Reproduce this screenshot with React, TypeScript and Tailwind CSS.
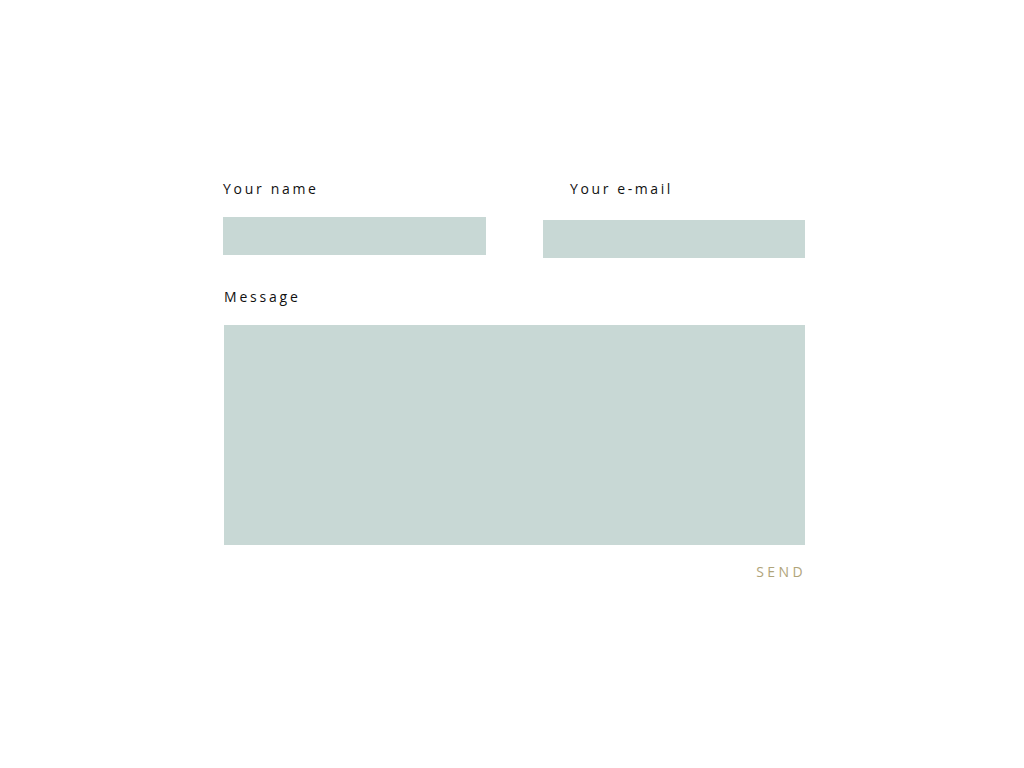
import React from "react";

export default function App() {
  return (
    <div className="w-[1024px] h-[768px] bg-white" style={{ fontFamily: '"Open Sans", sans-serif' }}>
      <div className="pt-[179px] pl-[223px] w-[805px] flex flex-col">
        <div className="flex">
          <div className="w-[263px] flex flex-col">
            <label className="text-[14px] leading-[20px] tracking-[2.7px] text-[#111]">Your name</label>
            <div className="mt-[18px] h-[38px] bg-[#c8d8d5]" />
          </div>
          <div className="ml-[57px] w-[262px] flex flex-col">
            <label className="pl-[27px] text-[14px] leading-[20px] tracking-[2.6px] text-[#111]">Your e-mail</label>
            <div className="mt-[21px] h-[38px] bg-[#c8d8d5]" />
          </div>
        </div>
        <label className="mt-[29px] ml-[1px] text-[14px] leading-[20px] tracking-[2.8px] text-[#111]">Message</label>
        <div className="mt-[18px] ml-[1px] h-[220px] bg-[#c8d8d5]" />
        <div className="mt-[17px] flex justify-end">
          <span className="text-[14px] leading-[20px] tracking-[3.4px] mr-[-1px] text-[#b0a47a]">SEND</span>
        </div>
      </div>
    </div>
  );
}
